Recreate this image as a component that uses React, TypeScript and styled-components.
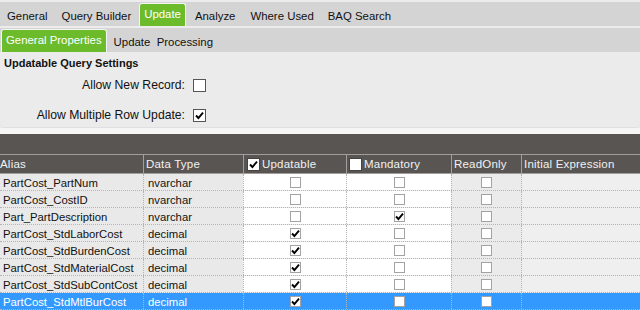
import React from "react";
import styled, { createGlobalStyle } from "styled-components";

const Global = createGlobalStyle`
  html, body { margin: 0; padding: 0; }
  body { font-family: "Liberation Sans", Arial, sans-serif; font-size: 11px; background: #ececec; }
`;

const Page = styled.div`
  width: 640px;
  height: 310px;
  overflow: hidden;
  background: #ececec;
  padding-top: 2px;
  box-sizing: border-box;
`;

const TabBar = styled.div<{ $mb?: number }>`
  height: 24px;
  background: #d4d4d4;
  display: flex;
  align-items: stretch;
  margin-bottom: ${(p) => p.$mb ?? 2}px;
`;

const Tab = styled.div<{ $active?: boolean; $ml?: number }>`
  display: flex;
  align-items: ${(p) => (p.$active ? "flex-start" : "center")};
  padding: ${(p) => (p.$active ? "4px 4px 0" : "3px 7px 0")};
  margin-left: ${(p) => p.$ml ?? 0}px;
  margin-top: ${(p) => (p.$active ? 1 : 0)}px;
  color: ${(p) => (p.$active ? "#ffffff" : "#111")};
  background: ${(p) => (p.$active ? "#6cbb2b" : "transparent")};
  border: ${(p) => (p.$active ? "1px solid #f4f4f4" : "none")};
  border-bottom: none;
  border-radius: 3px 3px 0 0;
  font-size: 11.4px;
  white-space: pre;
`;

const Panel = styled.div`
  height: 74px;
  background: #ebebeb;
  border-radius: 0 0 4px 4px;
  padding: 2px 0 0 4px;
  box-sizing: border-box;
  border-bottom: 1px solid #e0e0e0;
`;

const Spacer = styled.div`
  height: 6px;
  background: #f5f5f5;
`;

const PanelTitle = styled.div`
  font-weight: bold;
  font-size: 11px;
  color: #111;
  height: 14px;
  line-height: 14px;
`;

const Form = styled.div`
  display: grid;
  grid-template-columns: 181px 13px;
  column-gap: 8px;
  row-gap: 16px;
  margin-top: 8px;
  align-items: center;
`;

const Label = styled.div`
  text-align: right;
  font-size: 12.2px;
  color: #111;
`;

const Box = styled.div<{ $size?: number; $border?: string }>`
  width: ${(p) => p.$size ?? 11}px;
  height: ${(p) => p.$size ?? 11}px;
  box-sizing: border-box;
  border: 1px solid ${(p) => p.$border ?? "#a3a3a3"};
  background: #fff;
  display: flex;
  align-items: center;
  justify-content: center;
`;

const Check = () => (
  <svg width="9" height="9" viewBox="0 0 9 9">
    <path d="M1 4.5 L3.4 7 L8 1.6" fill="none" stroke="#000" strokeWidth="1.9" />
  </svg>
);

const CheckBox = ({ checked, size, border }: { checked?: boolean; size?: number; border?: string }) => (
  <Box $size={size} $border={border}>{checked ? <Check /> : null}</Box>
);

const DarkBand = styled.div`
  height: 20px;
  background: #585552;
`;

const COLS = "143px 100px 103px 105px 70px 1fr";

const HeaderRow = styled.div`
  display: grid;
  grid-template-columns: ${COLS};
  height: 20px;
  background: #585552;
  border-top: 1px solid #a19e9b;
  border-bottom: 1px solid #a19e9b;
  box-sizing: border-box;
`;

const HeadCell = styled.div<{ $pl?: number }>`
  display: flex;
  align-items: center;
  gap: 2px;
  padding-left: ${(p) => p.$pl ?? 2}px;
  color: #f2f2f2;
  font-size: 11.5px;
  letter-spacing: 0.2px;
  border-left: 1px solid #a19e9b;
  &:first-child { border-left: none; }
`;

const Row = styled.div<{ $sel?: boolean }>`
  display: grid;
  grid-template-columns: ${COLS};
  height: 17px;
  box-sizing: border-box;
  border-bottom: 1px dotted #b4b4b4;
  background: ${(p) => (p.$sel ? "#3399ff" : "transparent")};
  color: ${(p) => (p.$sel ? "#fff" : "#111")};
`;

type Kind = "alias" | "type" | "upd" | "man" | "ro" | "init";
const bgFor: Record<Kind, string> = {
  alias: "#e9e9e9",
  type: "#e9e9e9",
  upd: "#ffffff",
  man: "#ffffff",
  ro: "#ebebeb",
  init: "#efefef",
};

const Cell = styled.div<{ $kind: Kind; $sel?: boolean }>`
  display: flex;
  align-items: center;
  justify-content: ${(p) => (["upd", "man", "ro"].includes(p.$kind) ? "center" : "flex-start")};
  padding-left: ${(p) => (p.$kind === "alias" ? 3 : p.$kind === "type" ? 4 : 0)}px;
  padding-top: 1px;
  background: ${(p) => (p.$sel ? "transparent" : bgFor[p.$kind])};
  border-left: 1px dotted #b4b4b4;
  font-size: 11.3px;
  &:first-child { border-left: none; }
`;

const rows = [
  { alias: "PartCost_PartNum", type: "nvarchar", upd: false, man: false },
  { alias: "PartCost_CostID", type: "nvarchar", upd: false, man: false },
  { alias: "Part_PartDescription", type: "nvarchar", upd: false, man: true },
  { alias: "PartCost_StdLaborCost", type: "decimal", upd: true, man: false },
  { alias: "PartCost_StdBurdenCost", type: "decimal", upd: true, man: false },
  { alias: "PartCost_StdMaterialCost", type: "decimal", upd: true, man: false },
  { alias: "PartCost_StdSubContCost", type: "decimal", upd: true, man: false },
  { alias: "PartCost_StdMtlBurCost", type: "decimal", upd: true, man: false, sel: true },
];

export default function App() {
  return (
    <>
      <Global />
      <Page>
        <TabBar>
          <Tab>General</Tab>
          <Tab>Query Builder</Tab>
          <Tab $active $ml={1}>Update</Tab>
          <Tab $ml={2}>Analyze</Tab>
          <Tab $ml={1}>Where Used</Tab>
          <Tab>BAQ Search</Tab>
        </TabBar>
        <TabBar>
          <Tab $active $ml={1}>General Properties</Tab>
          <Tab>{"Update  Processing"}</Tab>
        </TabBar>
        <Panel>
          <PanelTitle>Updatable Query Settings</PanelTitle>
          <Form>
            <Label>Allow New Record:</Label>
            <CheckBox size={13} border="#555" />
            <Label>Allow Multiple Row Update:</Label>
            <CheckBox size={13} border="#555" checked />
          </Form>
        </Panel>
        <Spacer />
        <DarkBand />
        <HeaderRow>
          <HeadCell $pl={0}>Alias</HeadCell>
          <HeadCell>Data Type</HeadCell>
          <HeadCell $pl={3}>
            <CheckBox size={13} border="#444" checked /> Updatable
          </HeadCell>
          <HeadCell $pl={2}>
            <CheckBox size={13} border="#444" /> Mandatory
          </HeadCell>
          <HeadCell>ReadOnly</HeadCell>
          <HeadCell>Initial Expression</HeadCell>
        </HeaderRow>
        {rows.map((r) => (
          <Row key={r.alias} $sel={r.sel}>
            <Cell $kind="alias" $sel={r.sel}>{r.alias}</Cell>
            <Cell $kind="type" $sel={r.sel}>{r.type}</Cell>
            <Cell $kind="upd" $sel={r.sel}><CheckBox checked={r.upd} /></Cell>
            <Cell $kind="man" $sel={r.sel}><CheckBox checked={r.man} /></Cell>
            <Cell $kind="ro" $sel={r.sel}><CheckBox /></Cell>
            <Cell $kind="init" $sel={r.sel} />
          </Row>
        ))}
      </Page>
    </>
  );
}
